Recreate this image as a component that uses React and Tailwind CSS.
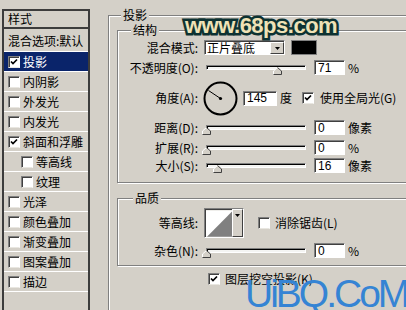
import React from 'react'

function Check({ checked }) {
  return (
    <span className="w-[12px] h-[12px] shrink-0 bg-white border border-t-[#808080] border-l-[#808080] border-r-white border-b-[#e8e6e0] shadow-[inset_1px_1px_0_#404040] flex items-center justify-center">
      {checked && (
        <svg width="8" height="8" viewBox="0 0 8 8">
          <path d="M1 3.5 L3 5.6 L7 1.5" stroke="#000" strokeWidth="1.7" fill="none" />
        </svg>
      )}
    </span>
  )
}

function Thumb({ className }) {
  return (
    <svg className={`absolute top-[7px] ${className}`} width="9" height="8" viewBox="0 0 9 8">
      <polygon points="0.5,7.5 0.5,4 4.5,0.5 8.5,4 8.5,7.5" fill="#d4d0c8" />
      <polyline points="0.5,7.5 0.5,4 4.5,0.5" stroke="#fff" fill="none" />
      <polyline points="4.5,0.5 8.5,4 8.5,7.5 0.5,7.5" stroke="#404040" fill="none" />
    </svg>
  )
}

function Slider({ thumb }) {
  return (
    <div className="relative w-[100px] h-[15px] ml-[8px] shrink-0">
      <div className="absolute left-0 right-0 top-[5px] h-[5px] bg-[#f4f4f2] border border-t-[#808080] border-l-[#808080] border-b-white border-r-white shadow-[inset_1px_1px_0_#000]" />
      <Thumb className={thumb} />
    </div>
  )
}

function Field({ value, className }) {
  return (
    <div className={`h-[15px] shrink-0 bg-white border border-t-[#808080] border-l-[#808080] border-b-white border-r-white shadow-[inset_1px_1px_0_#404040] flex items-center pl-[3px] [font-family:'Liberation_Sans',sans-serif] text-[12px] ${className}`}>
      {value}
    </div>
  )
}

function ListRow({ label, checked, selected, indent }) {
  return (
    <div className={`h-[20px] shrink-0 border-b border-white flex items-center gap-[3px] ${indent ? 'pl-[17px]' : 'pl-[4px]'} ${selected ? 'bg-[#0a246a] text-white' : ''}`}>
      <Check checked={checked} />
      <span>{label}</span>
    </div>
  )
}

function SliderRow({ label, value, unit, thumb, gap }) {
  return (
    <div className={`flex items-center h-[15px] shrink-0 ${gap}`}>
      <span className="w-[80px] shrink-0 text-right">{label}</span>
      <Slider thumb={thumb} />
      <Field value={value} className="w-[31px] ml-[8px]" />
      <span className="ml-[3px]">{unit}</span>
    </div>
  )
}

export default function App() {
  const items = [
    { label: '投影', checked: true, selected: true },
    { label: '内阴影' },
    { label: '外发光' },
    { label: '内发光' },
    { label: '斜面和浮雕', checked: true },
    { label: '等高线', indent: true },
    { label: '纹理', indent: true },
    { label: '光泽' },
    { label: '颜色叠加' },
    { label: '渐变叠加' },
    { label: '图案叠加' },
    { label: '描边' },
  ]

  return (
    <div className="relative w-[406px] h-[310px] overflow-hidden bg-[#d4d0c8] flex items-start text-black text-[12px] leading-none [font-family:'Noto_Sans_CJK_SC',sans-serif]">
      {/* Style list */}
      <div className="ml-[2px] mt-[9px] w-[88px] h-[301px] shrink-0 border-2 border-b-0 border-[#3c3c3c] flex flex-col">
        <div className="h-[18px] shrink-0 border-b-2 border-[#3c3c3c] flex items-center pl-[4px]">样式</div>
        <div className="h-[23px] shrink-0 border-b border-white flex items-center pl-[4px] pt-[2px]">混合选项:默认</div>
        {items.map((it) => (
          <ListRow key={it.label} {...it} />
        ))}
      </div>

      {/* Drop shadow group */}
      <div className="relative ml-[18px] mt-[15px] w-[330px] h-[300px] shrink-0 border-l border-t border-[#808080] shadow-[inset_1px_1px_0_#fff] flex flex-col">
        <span className="absolute left-[12px] top-[-7px] px-[2px] bg-[#d4d0c8]">投影</span>

        {/* Structure */}
        <div className="relative ml-[8px] mt-[14px] w-[320px] h-[153px] shrink-0 border border-[#808080] shadow-[inset_1px_1px_0_#fff,1px_1px_0_#fff] flex flex-col">
          <span className="absolute left-[13px] top-[-7px] px-[2px] bg-[#d4d0c8]">结构</span>

          <div className="flex items-center h-[15px] shrink-0 mt-[9px]">
            <span className="w-[80px] shrink-0 text-right">混合模式:</span>
            <div className="ml-[6px] w-[81px] h-[15px] shrink-0 bg-white border border-t-[#808080] border-l-[#808080] border-b-white border-r-white shadow-[inset_1px_1px_0_#404040] flex items-center justify-between pl-[2px]">
              <span>正片叠底</span>
              <span className="w-[14px] h-[12px] mt-[1px] bg-[#d4d0c8] border border-t-white border-l-white border-b-[#404040] border-r-[#404040] flex items-center justify-center">
                <svg width="5" height="3" viewBox="0 0 5 3"><polygon points="0,0 5,0 2.5,3" fill="#000" /></svg>
              </span>
            </div>
            <div className="ml-[6px] w-[26px] h-[15px] shrink-0 bg-black border border-[#808080]" />
          </div>

          <SliderRow label="不透明度(O):" value="71" unit="%" thumb="left-[67px]" gap="mt-[5px]" />

          <div className="flex items-center h-[34px] shrink-0 mt-[6px]">
            <span className="w-[80px] shrink-0 text-right">角度(A):</span>
            <svg className="ml-[5px] shrink-0" width="35" height="35" viewBox="0 0 35 35">
              <circle cx="17.5" cy="17.5" r="16" stroke="#000" strokeWidth="2" fill="none" />
              <line x1="17.5" y1="17.5" x2="5.5" y2="9.5" stroke="#000" strokeWidth="1" />
              <circle cx="17.5" cy="17.5" r="1.6" fill="#000" />
            </svg>
            <Field value="145" className="w-[34px] ml-[5px]" />
            <span className="ml-[3px]">度</span>
            <span className="ml-[10px]"><Check checked /></span>
            <span className="ml-[6px]">使用全局光(G)</span>
          </div>

          <SliderRow label="距离(D):" value="0" unit="像素" thumb="left-[-4px]" gap="mt-[5px]" />
          <SliderRow label="扩展(R):" value="0" unit="%" thumb="left-[-4px]" gap="mt-[5px]" />
          <SliderRow label="大小(S):" value="16" unit="像素" thumb="left-[7px]" gap="mt-[3px]" />
        </div>

        {/* Quality */}
        <div className="relative ml-[8px] mt-[15px] w-[320px] h-[68px] shrink-0 border border-[#808080] shadow-[inset_1px_1px_0_#fff,1px_1px_0_#fff] flex flex-col">
          <span className="absolute left-[15px] top-[-7px] px-[2px] bg-[#d4d0c8]">品质</span>

          <div className="flex items-center h-[30px] shrink-0 mt-[9px]">
            <span className="w-[80px] shrink-0 text-right">等高线:</span>
            <div className="ml-[6px] w-[40px] h-[30px] shrink-0 flex border border-t-[#808080] border-l-[#808080] border-b-white border-r-white shadow-[inset_1px_1px_0_#404040]">
              <svg className="mt-[1px] ml-[1px]" width="27" height="27" viewBox="0 0 27 27">
                <rect width="27" height="27" fill="#fff" />
                <polygon points="1,27 27,1 27,27" fill="#808080" />
              </svg>
              <span className="w-[11px] h-[28px] bg-[#d4d0c8] border border-t-white border-l-white border-b-[#404040] border-r-[#404040] flex justify-center pt-[4px]">
                <svg width="5" height="3" viewBox="0 0 5 3"><polygon points="0,0 5,0 2.5,3" fill="#000" /></svg>
              </span>
            </div>
            <span className="ml-[14px]"><Check /></span>
            <span className="ml-[5px]">消除锯齿(L)</span>
          </div>

          <SliderRow label="杂色(N):" value="0" unit="%" thumb="left-[-4px]" gap="mt-[5px]" />
        </div>

        <div className="flex items-center h-[12px] shrink-0 mt-[7px] ml-[99px]">
          <Check checked />
          <span className="ml-[5px]">图层挖空投影(K)</span>
        </div>
      </div>

      {/* watermarks */}
      <span className="absolute left-[185px] top-[15px] text-[22px] leading-none font-bold tracking-[-0.5px] text-[#efe2b6] [font-family:'Liberation_Sans',sans-serif] [-webkit-text-stroke:5px_#0d3232] [paint-order:stroke_fill]">
        www.68ps.com
      </span>
      <span className="absolute left-[245px] top-[274px] text-[39px] leading-none tracking-[-3px] text-[#3584d4] [font-family:'Liberation_Sans',sans-serif]">
        UiBQ.CoM
      </span>
    </div>
  )
}
